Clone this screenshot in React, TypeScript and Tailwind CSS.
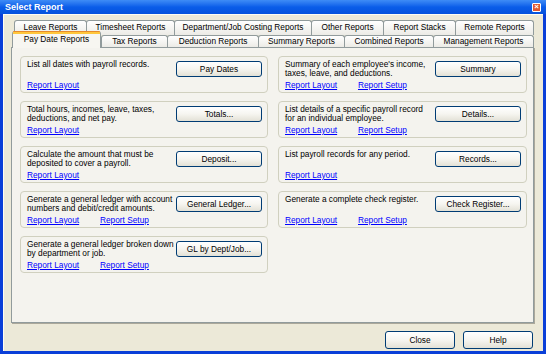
import React from 'react';

type Report = {
  lines: string[];
  button: string;
  setup?: boolean;
};

const leftReports: Report[] = [
  { lines: ['List all dates with payroll records.'], button: 'Pay Dates' },
  { lines: ['Total hours, incomes, leave, taxes,', 'deductions, and net pay.'], button: 'Totals...' },
  { lines: ['Calculate the amount that must be', 'deposited to cover a payroll.'], button: 'Deposit...' },
  { lines: ['Generate a general ledger with account', 'numbers and debit/credit amounts.'], button: 'General Ledger...', setup: true },
  { lines: ['Generate a general ledger broken down', 'by department or job.'], button: 'GL by Dept/Job...', setup: true },
];

const rightReports: Report[] = [
  { lines: ["Summary of each employee's income,", 'taxes, leave, and deductions.'], button: 'Summary', setup: true },
  { lines: ['List details of a specific payroll record', 'for an individual employee.'], button: 'Details...', setup: true },
  { lines: ['List payroll records for any period.'], button: 'Records...' },
  { lines: ['Generate a complete check register.'], button: 'Check Register...', setup: true },
];

const backTabs = [
  { label: 'Leave Reports', w: 'w-[73px]' },
  { label: 'Timesheet Reports', w: 'w-[89px]' },
  { label: 'Department/Job Costing Reports', w: 'w-[138px]' },
  { label: 'Other Reports', w: 'w-[73px]' },
  { label: 'Report Stacks', w: 'w-[73px]' },
  { label: 'Remote Reports', w: 'w-[79px]' },
];

const frontTabs = [
  { label: 'Tax Reports', w: 'w-[67px]' },
  { label: 'Deduction Reports', w: 'w-[92px]' },
  { label: 'Summary Reports', w: 'w-[87px]' },
  { label: 'Combined Reports', w: 'w-[90px]' },
  { label: 'Management Reports', w: 'w-[101px]' },
];

function XpButton({ label, className = '' }: { label: string; className?: string }) {
  return (
    <button
      className={`shrink-0 rounded-[3px] border border-[#003C74] bg-gradient-to-b from-white via-[#F6F5F0] to-[#E3E1D6] text-[8.3px] leading-none text-black ${className}`}
    >
      {label}
    </button>
  );
}

function ReportBox({ report }: { report: Report }) {
  return (
    <div className="flex h-[37px] rounded-[4px] border border-[#D0D0BF] bg-[#F4F3EE]">
      <div className="min-w-0 flex-1 pl-[6px] pt-[3px]">
        <div className="h-[18px] whitespace-nowrap text-[8.3px] leading-[9px] text-black">
          {report.lines.map((l) => (
            <div key={l}>{l}</div>
          ))}
        </div>
        <div className="mt-[3px] flex text-[8.3px] leading-[9px] text-[#0000FF] underline">
          <span className="w-[73px]">Report Layout</span>
          {report.setup && <span>Report Setup</span>}
        </div>
      </div>
      <XpButton label={report.button} className="mt-[4px] mr-[5px] h-[16px] w-[86px]" />
    </div>
  );
}

export default function App() {
  return (
    <div
      className="flex h-[354px] w-[546px] flex-col bg-[#0A3FD8] text-black"
      style={{ fontFamily: '"Liberation Sans", Arial, sans-serif' }}
    >
      {/* title bar */}
      <div className="flex h-[14px] shrink-0 items-center bg-gradient-to-b from-[#3E8CF6] via-[#0A5DE9] to-[#0652DD] pl-[5px] pr-[5px]">
        <span className="text-[9px] font-bold leading-none text-white">Select Report</span>
        <div className="ml-auto flex h-[9px] w-[9px] items-center justify-center rounded-[1px] border border-white bg-[#E0582F] text-[8px] font-bold leading-none text-white">
          ×
        </div>
      </div>

      <div className="mx-[3px] mb-[3px] flex flex-1 flex-col border-l border-t border-[#FFFDF2] bg-[#ECE9D8]">
        {/* back tab row */}
        <div className="mt-[5px] flex h-[15px] pl-[10px]">
          {backTabs.map((t) => (
            <div
              key={t.label}
              className={`${t.w} -mr-px flex items-start justify-center rounded-t-[3px] border border-b-0 border-[#919B9C] bg-gradient-to-b from-white to-[#ECEBE6] pt-[2px] text-[8.3px] leading-[9px]`}
            >
              {t.label}
            </div>
          ))}
        </div>

        {/* front tab row */}
        <div className="relative z-10 -mt-[2px] flex h-[14px] items-end pl-[8px]">
          <div className="-mb-px flex h-[17px] w-[89px] flex-col rounded-t-[3px] border-x border-[#919B9C] bg-[#F7F6F1]">
            <div className="h-[1px] rounded-t-[3px] bg-[#E68B2C]" />
            <div className="h-[2px] bg-[#FFC73C]" />
            <div className="pt-[1px] text-center text-[8.3px] leading-[9px]">Pay Date Reports</div>
          </div>
          {frontTabs.map((t) => (
            <div
              key={t.label}
              className={`${t.w} -mr-px flex h-[12px] items-start justify-center rounded-t-[3px] border border-b-0 border-[#919B9C] bg-gradient-to-b from-white to-[#ECEBE6] pt-[1px] text-[8.3px] leading-[9px]`}
            >
              {t.label}
            </div>
          ))}
        </div>

        {/* tab page */}
        <div className="ml-[7px] mr-[9px] h-[276px] border border-[#919B9C] bg-[#F4F3EE] pl-[8px] pt-[8px] shadow-[1px_1px_0_#ABA89B]">
          <div className="grid grid-cols-[248px_249px] gap-x-[10px]">
            <div className="flex flex-col gap-[8px]">
              {leftReports.map((r) => (
                <ReportBox key={r.button} report={r} />
              ))}
            </div>
            <div className="flex flex-col gap-[8px]">
              {rightReports.map((r) => (
                <ReportBox key={r.button} report={r} />
              ))}
            </div>
          </div>
        </div>

        {/* dialog buttons */}
        <div className="mr-[10px] mt-[8px] flex justify-end gap-[8px]">
          <XpButton label="Close" className="h-[18px] w-[70px]" />
          <XpButton label="Help" className="h-[18px] w-[70px]" />
        </div>
      </div>
    </div>
  );
}
